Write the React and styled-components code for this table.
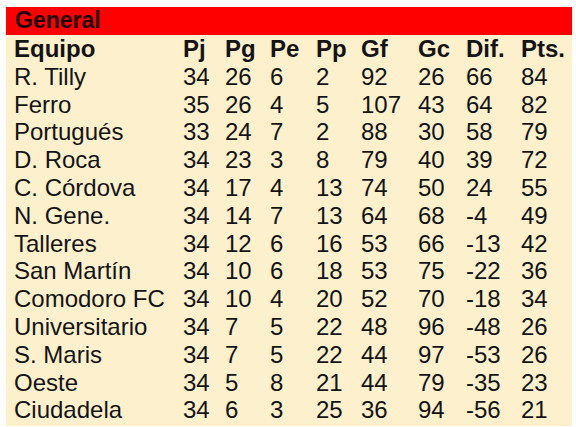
import React from "react";
import styled, { createGlobalStyle } from "styled-components";

const GlobalStyle = createGlobalStyle`
  html, body {
    margin: 0;
    padding: 0;
    background: #ffffff;
  }
`;

const Page = styled.main`
  padding: 7px 4px 2px 6px;
  font-family: "Liberation Sans", Arial, sans-serif;
`;

const Panel = styled.section`
  background: #fdf0cd;
  padding-bottom: 2px;
`;

const Title = styled.h2`
  margin: 0;
  height: 27.5px;
  line-height: 27.5px;
  padding-left: 9px;
  background: #ff0000;
  color: #1c0000;
  font-size: 23px;
  font-weight: bold;
`;

const Table = styled.div`
  display: grid;
  grid-template-columns: 169px 42px 45px 46px 45px 57px 48px 55px 1fr;
  padding-left: 8px;
  padding-top: 0.5px;
  color: #141414;
  font-size: 24px;
`;

const Cell = styled.div`
  height: 27.8px;
  line-height: 27.8px;
  white-space: nowrap;
  font-weight: ${(p) => (p.$head ? "bold" : "normal")};
`;

const head = ["Equipo", "Pj", "Pg", "Pe", "Pp", "Gf", "Gc", "Dif.", "Pts."];

const rows = [
  ["R. Tilly", 34, 26, 6, 2, 92, 26, 66, 84],
  ["Ferro", 35, 26, 4, 5, 107, 43, 64, 82],
  ["Portugués", 33, 24, 7, 2, 88, 30, 58, 79],
  ["D. Roca", 34, 23, 3, 8, 79, 40, 39, 72],
  ["C. Córdova", 34, 17, 4, 13, 74, 50, 24, 55],
  ["N. Gene.", 34, 14, 7, 13, 64, 68, -4, 49],
  ["Talleres", 34, 12, 6, 16, 53, 66, -13, 42],
  ["San Martín", 34, 10, 6, 18, 53, 75, -22, 36],
  ["Comodoro FC", 34, 10, 4, 20, 52, 70, -18, 34],
  ["Universitario", 34, 7, 5, 22, 48, 96, -48, 26],
  ["S. Maris", 34, 7, 5, 22, 44, 97, -53, 26],
  ["Oeste", 34, 5, 8, 21, 44, 79, -35, 23],
  ["Ciudadela", 34, 6, 3, 25, 36, 94, -56, 21],
];

export default function App() {
  return (
    <Page>
      <GlobalStyle />
      <Panel>
        <Title>General</Title>
        <Table>
          {head.map((h) => (
            <Cell key={h} $head>
              {h}
            </Cell>
          ))}
          {rows.map((r) =>
            r.map((v, i) => <Cell key={r[0] + i}>{v}</Cell>)
          )}
        </Table>
      </Panel>
    </Page>
  );
}
